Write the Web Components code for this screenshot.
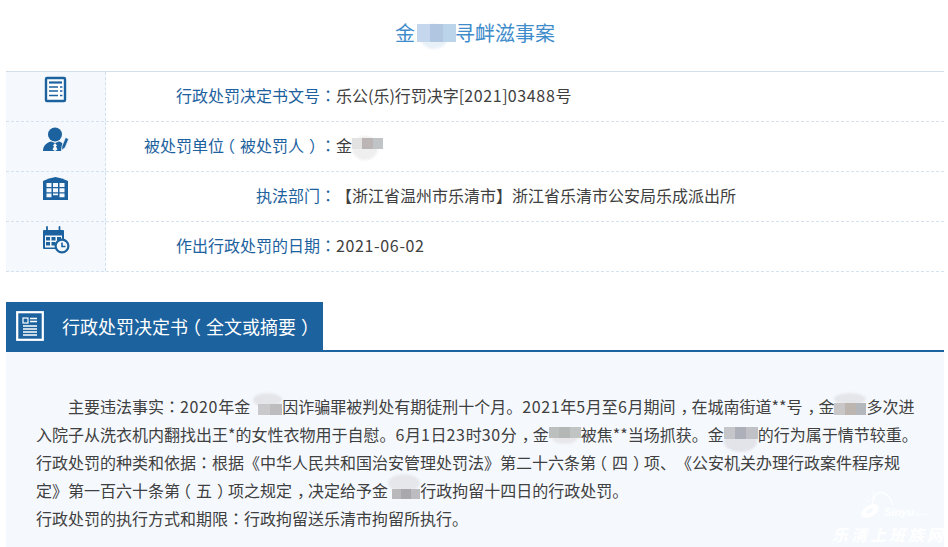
<!DOCTYPE html>
<html lang="zh-CN">
<head>
<meta charset="utf-8">
<title>金寻衅滋事案</title>
<style>
html, body { margin: 0; padding: 0; background: #fff; overflow: hidden; }
body { font-family: "Noto Sans CJK SC", "Liberation Sans", sans-serif; height: 547px; position: relative; text-spacing-trim: space-all; }
svg { display: block; }
.n { letter-spacing: .65px; }
.c { font-family: "Noto Sans CJK TC", sans-serif; }
.r { padding-left: 5px; letter-spacing: -5px; }
.t { letter-spacing: -5px; }
.o { padding-right: 5px; }
</style>
</head>
<body>

<case-page>
    <case-title>金<blur-mask w="40" block="2 3 39 18" oval="5 3 28 25" cells="#c4d7ec,#b1c6e0,#bcd4ea" shade="#e8f0f8"></blur-mask>寻衅滋事案</case-title>

    <info-table>
        <info-row label="行政处罚决定书文号">
            <svg slot="icon" width="24" height="28" viewBox="0 0 24 28">
                <rect x="2" y="2" width="19" height="23" rx="1" fill="#fff" stroke="#1c629e" stroke-width="2.4"/>
                <path d="M5 6.500h13" stroke="#1c629e" stroke-width="2.200"/>
                <path d="M5 11h9M5 15h9M5 19.500h9M16 11h2.400M16 15h2.400M16 19.500h2.400" stroke="#1c629e" stroke-width="1.600"/>
            </svg>
            乐公(乐)行罚决字[2021]03488号
        </info-row>
        <info-row label="被处罚单位（被处罚人）">
            <svg slot="icon" width="26" height="26" viewBox="0 0 26 26">
                <circle cx="12" cy="8.500" r="7" fill="#1c629e"/>
                <path d="M0 25c0-5 3.500-8.500 8-9.500l4 1.500 4-1.500c1.500.4 2.500 1 3.500 2L18 25z" fill="#1c629e"/>
                <path d="M12 17l-2 2.500 1 1-1.500 3 2.500 1.500 2.500-1.500-1.500-3 1-1z" fill="#f5f9fe"/>
                <path d="M18.500 24.500l.5-4.500 3.500-8.500 3.200 1.400-3.500 8.500z" fill="#1c629e" stroke="#f5f9fe" stroke-width=".7"/>
            </svg>
            金<blur-mask w="32" block="0 2 31 11" oval="0 0 26 24" cells="#e2e2e2,#bcb5b6,#c1c4c7" shade="#efefef"></blur-mask>
        </info-row>
        <info-row label="执法部门">
            <svg slot="icon" width="26" height="26" viewBox="0 0 26 26">
                <path d="M0 24V5Q6 2 12.500 1 19 2 25 5v19z" fill="#1c629e"/>
                <path d="M3.500 7h5v4h-5zM10 7h5v4h-5zM16.500 7h5v4h-5zM3.500 12.300h5v4h-5zM10 12.300h5v4h-5zM16.500 12.300h5v4h-5zM3.500 17.600h5v3.600h-5zM16.500 17.600h5v3.600h-5zM10 17.600h5v1.600h-5z" fill="#f5f9fe"/>
            </svg>
            【浙江省温州市乐清市】浙江省乐清市公安局乐成派出所
        </info-row>
        <info-row label="作出行政处罚的日期">
            <svg slot="icon" width="28" height="28" viewBox="0 0 28 28">
                <path d="M2 4h19a1 1 0 0 1 1 1v18H2a1 1 0 0 1-1-1V5a1 1 0 0 1 1-1z" fill="#1c629e"/>
                <path d="M3 9.500h17v12H3z" fill="#f5f9fe"/>
                <path d="M4 11h4v3.500H4zM9.500 11h4v3.500h-4zM15 11h4v3.500h-4zM4 16h4v3.500H4zM9.500 16h4v3.500h-4z" fill="#1c629e"/>
                <path d="M5 1v5M17.500 1v5" stroke="#1c629e" stroke-width="1.800" stroke-linecap="round"/>
                <circle cx="20" cy="20" r="6.400" fill="#f5f9fe" stroke="#1c629e" stroke-width="2.200"/>
                <path d="M20 16.500V20.500H23.500" fill="none" stroke="#1c629e" stroke-width="1.600"/>
            </svg>
            2021-06-02
        </info-row>
    </info-table>

    <section-panel heading="行政处罚决定书（全文或摘要）">
        <svg slot="icon" width="28" height="30" viewBox="0 0 28 30">
            <rect x="1.200" y="1.200" width="25.600" height="27.600" fill="none" stroke="#fff" stroke-width="2.200"/>
            <rect x="7" y="7" width="5" height="5" fill="none" stroke="#fff" stroke-width="1.200"/>
            <path d="M14 7.500h7M14 10.500h7M7 15h14M7 18h14M7 21h14M7 24h14" stroke="#fff" stroke-width="1.400"/>
        </svg>
        <p class="lead">主要违法事实：2020年金<blur-mask w="32" block="8 7 24 11" oval="3 -4 29 14" cells="#c9c9cb,#bdbdbf" shade="#e4e5e8"></blur-mask>因诈骗罪被判处有期徒刑十个月。2021年5月至6月期间，在城南街道**号，金<blur-mask w="32" block="0 6 32 12" oval="0 -4 32 12" cells="#c8c6c6,#bcb5b0,#b4b8bd" shade="#e5e6e9"></blur-mask>多次进<br>入院子从洗衣机内翻找出王*的女性衣物用于自慰。6月1日23时30分，金<blur-mask w="32" block="0 2 32 11" oval="3 8 25 11" cells="#bbc0bf,#b3b8b6,#c0c5c4" shade="#e8e8eb"></blur-mask>被焦**当场抓获。金<blur-mask w="34" block="0 2 34 12" oval="0 7 33 20" cells="#c4c6ca,#adb0b8,#bfc1c6" shade="#e3e4ea"></blur-mask>的行为属于情节较重。</p>
        <p>行政处罚的种类和依据：根据《中华人民共和国治安管理处罚法》第二十六条第（四）项、《公安机关办理行政案件程序规<br>定》第一百六十条第（五）项之规定，决定给予金<blur-mask w="32" block="4 8 28 10" oval="0 -7 32 18" cells="#b9b9bc,#a9a9ad,#bdbdc1" shade="#e6e7ea"></blur-mask>行政拘留十四日的行政处罚。</p>
        <p>行政处罚的执行方式和期限：行政拘留送乐清市拘留所执行。</p>
    </section-panel>
</case-page>

<site-watermark>乐清上班族网</site-watermark>

<script>
// wraps digits and the full-width marks that sit off-centre in this font
function dress(root) {
    const walker = document.createTreeWalker(root, NodeFilter.SHOW_TEXT);
    const nodes = [];
    while (walker.nextNode()) nodes.push(walker.currentNode);
    nodes.forEach(node => {
        const box = document.createElement("span");
        box.innerHTML = dressText(node.textContent);
        node.replaceWith(...box.childNodes);
    });
}

function dressText(text) {
    return text
        .replace(/[\d-]+/g, '<span class="n">$&</span>')
        .replace(/：/g, '<span class="c" lang="zh-TW">$&</span>')
        .replace(/[，）]/g, '<span class="r">$&</span>')
        .replace(/(.)（/g, '<span class="t">$1</span><span class="o">（</span>');
}

const MARK_CSS = `
    .c { font-family: "Noto Sans CJK TC", sans-serif; }
    .r { padding-left: 5px; letter-spacing: -5px; }
    .t { letter-spacing: -5px; }
    .o { padding-right: 5px; }
`;

class CasePage extends HTMLElement {
    constructor() {
        super();
        this.attachShadow({mode: "open"}).innerHTML = `
        <style>
        :host { display: block; padding: 0 4px 0 6px; }
        </style>
        <slot></slot>`;
    }
}

class CaseTitle extends HTMLElement {
    constructor() {
        super();
        this.attachShadow({mode: "open"}).innerHTML = `
        <style>
        :host {
            display: block;
            height: 71px;
            line-height: 65px;
            text-align: center;
            font-size: 20px;
            color: #3f8ccb;
        }
        </style>
        <slot></slot>`;
    }
}

class BlurMask extends HTMLElement {
    constructor() {
        super();
        this.attachShadow({mode: "open"});
    }

    connectedCallback() {
        const [bx, by, bw, bh] = this.getAttribute("block").split(" ");
        const [ox, oy, ow, oh] = this.getAttribute("oval").split(" ");
        const cells = this.getAttribute("cells").split(",").map(c => `<i style="background:${c}"></i>`).join("");
        this.shadowRoot.innerHTML = `
        <style>
        :host { display: inline-block; position: relative; width: ${this.getAttribute("w")}px; height: 1em; }
        .oval {
            position: absolute;
            left: ${ox}px; top: ${oy}px; width: ${ow}px; height: ${oh}px;
            border-radius: 50%;
            background: ${this.getAttribute("shade")};
            filter: blur(1px);
        }
        .block {
            position: absolute;
            left: ${bx}px; top: ${by}px; width: ${bw}px; height: ${bh}px;
            display: flex;
            filter: blur(.6px);
        }
        i { flex: 1; }
        </style>
        <div class="oval"></div>
        <div class="block">${cells}</div>`;
    }
}

class InfoTable extends HTMLElement {
    constructor() {
        super();
        this.attachShadow({mode: "open"}).innerHTML = `
        <style>
        :host { display: block; border-top: 1px solid #d3dfe9; }
        </style>
        <slot></slot>`;
    }
}

class InfoRow extends HTMLElement {
    constructor() {
        super();
        this.attachShadow({mode: "open"});
    }

    connectedCallback() {
        dress(this);
        this.shadowRoot.innerHTML = `
        <style>
        :host {
            display: grid;
            grid-template-columns: 100px 230px 1fr;
            height: 50px;
            box-sizing: border-box;
            border-bottom: 1px dashed #d5e2ef;
            background: linear-gradient(90deg, #f5f9fe 100px, #fff 100px);
            font-size: 16px;
            line-height: 46px;
            color: #404040;
        }
        .icon {
            display: flex;
            justify-content: center;
            border-right: 1px dashed #cfe0f0;
            padding-top: 4px;
            box-sizing: border-box;
        }
        .label { text-align: right; color: #1d629e; }
        ${MARK_CSS}
        </style>
        <div class="icon"><slot name="icon"></slot></div>
        <div class="label">${dressText(this.getAttribute("label") + "：")}</div>
        <div class="value"><slot></slot></div>`;
    }
}

class SectionPanel extends HTMLElement {
    constructor() {
        super();
        this.attachShadow({mode: "open"});
    }

    connectedCallback() {
        this.querySelectorAll("p").forEach(dress);
        this.shadowRoot.innerHTML = `
        <style>
        :host { display: block; margin-top: 30px; }
        .head { border-bottom: 2px solid #1c629e; height: 48px; }
        .tab {
            display: inline-flex;
            align-items: center;
            gap: 18px;
            height: 50px;
            box-sizing: border-box;
            padding: 0 9px 2px 10px;
            background: #1c629e;
            color: #fff;
            font-size: 18px;
        }
        .body {
            background: #f5f9fe;
            padding: 40px 31px 40px 30px;
            font-size: 16px;
            line-height: 28px;
            color: #404040;
            white-space: nowrap;
        }
        ::slotted(p) { margin: 0; }
        ::slotted(p.lead) { text-indent: 32px; }
        ${MARK_CSS}
        </style>
        <div class="head"><div class="tab"><slot name="icon"></slot><span>${dressText(this.getAttribute("heading"))}</span></div></div>
        <div class="body"><slot></slot></div>`;
    }
}

class SiteWatermark extends HTMLElement {
    constructor() {
        super();
        this.attachShadow({mode: "open"}).innerHTML = `
        <style>
        :host {
            position: absolute;
            right: 2px;
            bottom: 3px;
            display: block;
            color: #fff;
            font-size: 16px;
            font-style: italic;
            font-weight: 700;
            letter-spacing: 3px;
            line-height: 20px;
        }
        svg { position: absolute; left: 26px; bottom: 24px; }
        .brand {
            position: absolute;
            left: 52px;
            bottom: 24px;
            font: italic 700 11px/12px "Liberation Sans", sans-serif;
            letter-spacing: 0;
        }
        .brand small { font-size: 6px; font-weight: 400; }
        </style>
        <svg width="36" height="30" viewBox="0 0 36 30">
            <ellipse cx="12" cy="21" rx="9.500" ry="5.500" fill="#fff" transform="rotate(-32 12 21)"/>
            <ellipse cx="11.500" cy="21" rx="4" ry="1.800" fill="#f5f9fe" transform="rotate(-32 11.500 21)"/>
            <path d="M14 15C15 9 17 3 22 2.500 28 2 33 8 35 15" fill="none" stroke="#fff" stroke-width="1.200"/>
            <path d="M12 12L4 8M13 10L8 3M15 8L15 1" stroke="#fff" stroke-width="1" stroke-dasharray="2 1"/>
        </svg>
        <span class="brand">Sinyu<small>.com</small></span>
        <slot></slot>`;
    }
}

customElements.define("case-page", CasePage);
customElements.define("case-title", CaseTitle);
customElements.define("blur-mask", BlurMask);
customElements.define("info-table", InfoTable);
customElements.define("info-row", InfoRow);
customElements.define("section-panel", SectionPanel);
customElements.define("site-watermark", SiteWatermark);
</script>
</body>
</html>
